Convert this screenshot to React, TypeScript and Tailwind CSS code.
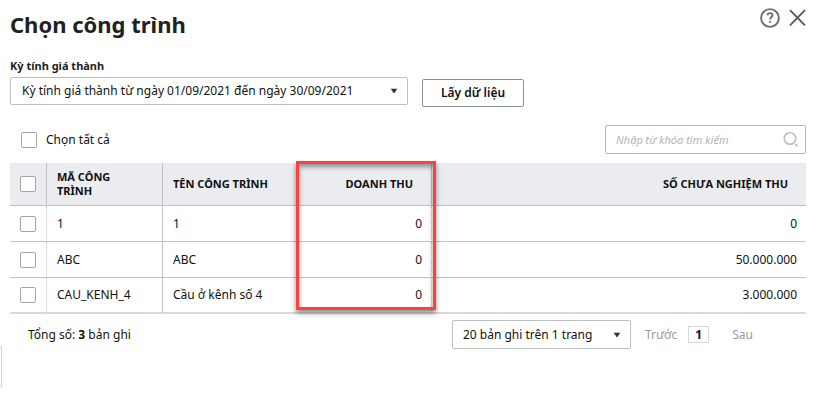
import { useState } from 'react'

interface Project {
  code: string
  name: string
  revenue: string
  unaccepted: string
}

const PROJECTS: Project[] = [
  { code: '1', name: '1', revenue: '0', unaccepted: '0' },
  { code: 'ABC', name: 'ABC', revenue: '0', unaccepted: '50.000.000' },
  { code: 'CAU_KENH_4', name: 'Cầu ở kênh số 4', revenue: '0', unaccepted: '3.000.000' },
]

const CHECKBOX =
  'block size-4 shrink-0 appearance-none rounded-[2px] border border-[#a3a5a8] bg-white checked:bg-[#2ca01c]'

function Caret() {
  return (
    <svg viewBox="0 0 8 5" className="pointer-events-none absolute right-[10px] top-1/2 h-[5px] w-2 -translate-y-1/2">
      <path d="M0.5 0h7L4 5z" fill="#333" />
    </svg>
  )
}

export default function App() {
  const [selected, setSelected] = useState<string[]>([])
  const [keyword, setKeyword] = useState('')

  const allSelected = selected.length === PROJECTS.length
  const toggleAll = () => setSelected(allSelected ? [] : PROJECTS.map((p) => p.code))
  const toggle = (code: string) =>
    setSelected(selected.includes(code) ? selected.filter((c) => c !== code) : [...selected, code])

  return (
    <div className="relative min-h-screen bg-white pl-[10px] pr-[14px] pt-2 font-['Noto_Sans',sans-serif] text-xs text-[#111]">
      <header className="flex items-start justify-between">
        <h1 className="text-[22px] font-bold leading-8 text-[#212121]">Chọn công trình</h1>
        <div className="flex gap-[9px]">
          <button aria-label="Trợ giúp">
            <svg viewBox="0 0 20 20" className="size-5" fill="none" stroke="#6b6c72" strokeWidth="1.9">
              <circle cx="10" cy="10" r="8.9" />
              <path d="M7.5 7.3C7.6 5.8 8.6 5.1 10 5.1c1.5 0 2.5.8 2.5 2.1 0 2-2.4 2-2.4 4.3" />
              <path d="M10.1 13v1.8" />
            </svg>
          </button>
          <button aria-label="Đóng">
            <svg viewBox="0 0 17 20" className="h-5 w-[17px]" fill="none" stroke="#55565b" strokeWidth="1.8">
              <path d="M1 2.2l15 15.2M16 2.2l-15 15.2" />
            </svg>
          </button>
        </div>
      </header>

      <div className="mt-[18px] flex items-end gap-[14px]">
        <div className="w-[398px]">
          <label htmlFor="period" className="block text-[11px] font-bold leading-4 text-[#212121]">
            Kỳ tính giá thành
          </label>
          <div className="relative mt-[3px]">
            <select
              id="period"
              className="block h-7 w-full appearance-none rounded-[2px] border border-[#babec5] bg-white pl-[11px] pr-7"
            >
              <option>Kỳ tính giá thành từ ngày 01/09/2021 đến ngày 30/09/2021</option>
            </select>
            <Caret />
          </div>
        </div>
        <button className="-mb-[2px] h-7 rounded-[2px] border border-[#8d9096] px-[18px] font-semibold">
          Lấy dữ liệu
        </button>
      </div>

      <div className="mt-5 flex items-center justify-between">
        <label className="flex items-center gap-[9px] pl-[11px]">
          <input type="checkbox" className={CHECKBOX} checked={allSelected} onChange={toggleAll} />
          Chọn tất cả
        </label>
        <div className="relative w-[201px]">
          <input
            type="text"
            aria-label="Tìm kiếm"
            value={keyword}
            onChange={(e) => setKeyword(e.target.value)}
            placeholder="Nhập từ khóa tìm kiếm"
            className="block h-[29px] w-full rounded-[2px] border border-[#b5b8bd] pl-[10px] pr-7 text-[11px] placeholder:italic placeholder:text-[#b3b3b3]"
          />
          <svg viewBox="0 0 16 16" className="absolute right-[7px] top-[6px] size-4" fill="none" stroke="#b9bbbf">
            <circle cx="7" cy="7.5" r="5.8" strokeWidth="1.5" />
            <path d="M12.4 13.2l2 1.9" strokeWidth="1.9" />
          </svg>
        </div>
      </div>

      <div className="relative mt-[9px]">
        <table className="w-full table-fixed border-separate border-spacing-0 border-b border-[#d9d9d9]">
          <colgroup>
            <col className="w-[37px]" />
            <col className="w-[116px]" />
            <col className="w-[136px]" />
            <col className="w-[133px]" />
            <col />
          </colgroup>
          <thead>
            <tr className="h-[43px] bg-[#ebecf0] text-left text-[11px] leading-[14px] *:border-b *:border-[#c0c2c5] *:font-bold">
              <th className="border-r pl-[10px]">
                <input
                  type="checkbox"
                  aria-label="Chọn tất cả công trình"
                  className={CHECKBOX}
                  checked={allSelected}
                  onChange={toggleAll}
                />
              </th>
              <th className="border-r pl-[10px] pr-5">MÃ CÔNG TRÌNH</th>
              <th className="pl-[10px]">TÊN CÔNG TRÌNH</th>
              <th className="border-r pr-[18px] text-right">DOANH THU</th>
              <th className="pr-[18px] text-right">SỐ CHƯA NGHIỆM THU</th>
            </tr>
          </thead>
          <tbody>
            {PROJECTS.map((p) => (
              <tr
                key={p.code}
                className="h-9 *:border-b *:border-[#c0c2c5] last:h-[35px] last:*:border-b-[#d9d9d9]"
              >
                <td className="border-r border-r-[#d0d0d0] pl-[10px] [border-right-style:dotted]">
                  <input
                    type="checkbox"
                    aria-label={`Chọn ${p.code}`}
                    className={CHECKBOX}
                    checked={selected.includes(p.code)}
                    onChange={() => toggle(p.code)}
                  />
                </td>
                <td className="border-r pl-[10px]">{p.code}</td>
                <td className="pl-[10px]">{p.name}</td>
                <td className="border-r pr-[9px] text-right [border-right-style:dotted]">{p.revenue}</td>
                <td className="pr-[9px] text-right">{p.unaccepted}</td>
              </tr>
            ))}
          </tbody>
        </table>
        {/* highlight over the revenue column */}
        <div className="pointer-events-none absolute -top-[2px] bottom-1 left-[286px] w-[140px] border-[3px] border-[#fb4143] shadow-[0_3px_5px_rgba(0,0,0,0.45),inset_0_3px_5px_rgba(0,0,0,0.4)]" />
      </div>

      <footer className="mt-[6px] flex items-center justify-between pl-[18px]">
        <span>
          Tổng số: <b>3</b> bản ghi
        </span>
        <div className="flex items-center pr-[53px] text-[#9a9a9a]">
          <div className="relative mr-[14px] w-[179px]">
            <select
              aria-label="Số bản ghi trên trang"
              className="block h-[29px] w-full appearance-none rounded-[2px] border border-[#babec5] bg-white pl-[10px] pr-7 text-[#111]"
            >
              <option>20 bản ghi trên 1 trang</option>
            </select>
            <Caret />
          </div>
          <button>Trước</button>
          <button className="ml-[11px] h-[17px] w-[21px] border border-[#d4d7dc] font-bold leading-[15px] text-[#111]">
            1
          </button>
          <button className="ml-[23px]">Sau</button>
        </div>
      </footer>

      {/* edge of the collapsed side handle */}
      <div className="absolute left-0 top-[346px] h-[42px] w-[2px] rounded-r-[2px] border border-l-0 border-[#d0d0d0]" />
    </div>
  )
}
